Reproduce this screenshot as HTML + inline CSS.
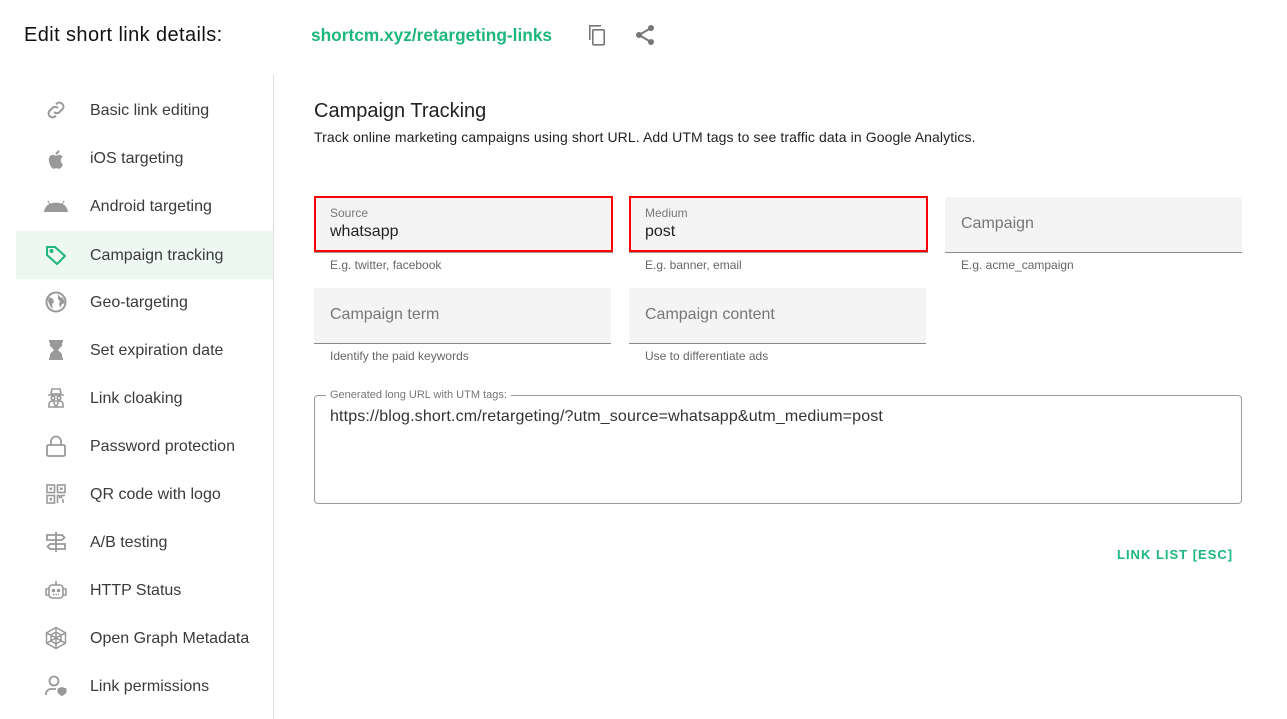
<!DOCTYPE html>
<html><head><meta charset="utf-8"><style>
*{box-sizing:border-box;margin:0;padding:0}
body{width:1287px;height:719px;background:#fff;font-family:"Liberation Sans",Arial,sans-serif;color:#212121;position:relative;overflow:hidden}
.abs{position:absolute}
.title{left:24px;top:24px;font-size:20px;color:#111;letter-spacing:0.4px}
.link{left:311px;top:25px;font-size:17.3px;font-weight:bold;color:#1db67d}
.side{left:273px;top:75px;width:1px;height:644px;background:#ddd}
.item{position:absolute;left:16px;width:257px;height:48px;font-size:16px;color:#3a3a3a}
.item span{position:absolute;left:74px;top:16px}
.item svg{position:absolute;left:28px;top:12px}
.sel{background:#edf8f3}
.field{position:absolute;background:#f4f4f4;border-bottom:1px solid #8a8a8a;height:56px;width:297px}
.field.err{border:2px solid #f00;box-shadow:0 1px 0 #999}
.ph{position:absolute;left:16px;top:18px;font-size:16px;color:#777}
.lab{position:absolute;left:14px;top:8px;font-size:12px;color:#777}
.val{position:absolute;left:14px;top:25px;font-size:16px;color:#222}
.help{position:absolute;font-size:12px;color:#666}
</style></head><body>
<div class="abs title">Edit short link details:</div>
<div class="abs link">shortcm.xyz/retargeting-links</div>
<svg class="abs" style="left:585px;top:23px" width="24" height="24" viewBox="0 0 24 24"><path d="M4 2v15h1.6V3.6H16V2z" fill="#777"/><rect x="7.8" y="6.8" width="11.4" height="15" rx="1" fill="none" stroke="#777" stroke-width="1.6"/></svg>
<svg class="abs" style="left:633px;top:23px" width="24" height="24" viewBox="0 0 24 24" fill="#777"><circle cx="18" cy="5" r="3"/><circle cx="6" cy="12" r="3"/><circle cx="18" cy="19" r="3"/><path d="M6 12L18 5M6 12l12 7" stroke="#777" stroke-width="2"/></svg>
<div class="abs side"></div>

<div class="item" style="top:86px"><svg width="24" height="24" viewBox="0 0 24 24" fill="none" stroke="#999" stroke-width="2"><path d="M10 14a4 4 0 0 0 5.6 0l3-3a4 4 0 0 0-5.6-5.6l-1 1"/><path d="M14 10a4 4 0 0 0-5.6 0l-3 3a4 4 0 0 0 5.6 5.6l1-1"/></svg><span>Basic link editing</span></div>
<div class="item" style="top:134px"><svg width="24" height="24" viewBox="2 1 20 20" fill="#999"><path d="M16 13c0-2 1.6-3 1.7-3-1-1.4-2.4-1.6-2.9-1.6-1.2-.1-2.4.7-3 .7s-1.6-.7-2.6-.7C7.8 8.4 6 9.6 6 12.5c0 3.4 2.4 7.5 4 7.5.9 0 1.3-.6 2.3-.6s1.3.6 2.3.6c1.6 0 2.8-2.7 3.2-3.8-.1 0-1.8-.8-1.8-3.2zM14 7c.6-.7 1-1.6.9-2.5-.8 0-1.8.5-2.4 1.2-.5.6-1 1.5-.9 2.4.9.1 1.8-.4 2.4-1.1z"/></svg><span>iOS targeting</span></div>
<div class="item" style="top:182px"><svg width="24" height="24" viewBox="0 0 24 24" fill="#999"><path d="M0 18c.3-3.5 2.3-6.5 5.2-8L3.4 7l.8-.5 1.9 3.1C7.6 9 10.3 8.6 12 8.6s4.4.4 5.9 1L19.8 6.5l.8.5-1.8 3c2.9 1.5 4.9 4.5 5.2 8z"/></svg><span>Android targeting</span></div>
<div class="item sel" style="top:231px"><svg width="24" height="24" viewBox="0 0 24 24" fill="none" stroke="#1db67d" stroke-width="2"><path d="M3 4h8l10 9-8 8L3 12z" stroke-linejoin="round"/><circle cx="7.5" cy="8" r="1" fill="#1db67d"/></svg><span>Campaign tracking</span></div>
<div class="item" style="top:278px"><svg width="24" height="24" viewBox="0 0 24 24"><circle cx="12" cy="12" r="9.5" fill="none" stroke="#999" stroke-width="2"/><path d="M5 7l4 2 1 3-2 2 1 5-3-3-2-5zM14 4l2 3 3 1 2 5-3 1-2 4-1-4 1-3-2-2z" fill="#999"/></svg><span>Geo-targeting</span></div>
<div class="item" style="top:326px"><svg width="24" height="24" viewBox="0 0 24 24" fill="#999"><path d="M5 2h14v2.5h-1v3.5l-4 4 4 4v3.5h1V22H5v-2.5h1V16l4-4-4-4V4.5H5z"/></svg><span>Set expiration date</span></div>
<div class="item" style="top:374px"><svg width="24" height="24" viewBox="0 0 24 24" fill="none" stroke="#999" stroke-width="1.6"><path d="M8 3h8l1 5H7zM4 9h16"/><circle cx="9" cy="12" r="1.8"/><circle cx="15" cy="12" r="1.8"/><path d="M5 21v-3a3 3 0 0 1 3-3h8a3 3 0 0 1 3 3v3zM9 15l3 6 3-6"/></svg><span>Link cloaking</span></div>
<div class="item" style="top:422px"><svg width="24" height="24" viewBox="0 0 24 24" fill="none" stroke="#999" stroke-width="1.8"><rect x="3" y="11" width="18" height="11" rx="1.5"/><path d="M7 11V7.5a5 5 0 0 1 10 0V11"/></svg><span>Password protection</span></div>
<div class="item" style="top:470px"><svg width="24" height="24" viewBox="0 0 24 24" fill="none" stroke="#999" stroke-width="1.6"><rect x="3" y="3" width="7.5" height="7.5"/><rect x="13.5" y="3" width="7.5" height="7.5"/><rect x="3" y="13.5" width="7.5" height="7.5"/><rect x="5.5" y="5.5" width="2.5" height="2.5" fill="#999" stroke="none"/><rect x="16" y="5.5" width="2.5" height="2.5" fill="#999" stroke="none"/><rect x="5.5" y="16" width="2.5" height="2.5" fill="#999" stroke="none"/><path d="M13.5 21v-7.5h2v2h2v-2h3.5M19 17v4"/></svg><span>QR code with logo</span></div>
<div class="item" style="top:518px"><svg width="24" height="24" viewBox="0 0 24 24" fill="none" stroke="#999" stroke-width="1.8"><path d="M12 2v20M3 5h15l2.5 2.5L18 10H3zM21 14H6l-2.5 2.5L6 19h15z"/></svg><span>A/B testing</span></div>
<div class="item" style="top:566px"><svg width="24" height="24" viewBox="0 0 24 24" fill="none" stroke="#999" stroke-width="1.6"><rect x="5" y="7" width="14" height="13" rx="3"/><path d="M12 3v4M5 11H2v6h3M19 11h3v6h-3"/><circle cx="9.5" cy="12.5" r="1" fill="#999"/><circle cx="14.5" cy="12.5" r="1" fill="#999"/><path d="M9 16.5h6" stroke-dasharray="1.5 1"/></svg><span>HTTP Status</span></div>
<div class="item" style="top:614px"><svg width="24" height="24" viewBox="0 0 24 24" fill="none" stroke="#999" stroke-width="1.5"><path d="M12 1.5l9.5 5.3v10.4L12 22.5l-9.5-5.3V6.8zM12 6l5 3v6l-5 3-5-3V9zM12 1.5v21M2.5 6.8l19 10.4M21.5 6.8l-19 10.4"/></svg><span>Open Graph Metadata</span></div>
<div class="item" style="top:662px"><svg width="24" height="24" viewBox="0 0 24 24" fill="none" stroke="#999" stroke-width="1.8"><circle cx="10" cy="7" r="4.5"/><path d="M2 21v-1a5 5 0 0 1 5-5h5"/><path d="M18 13l4.5 1.5v3c0 2-2.2 3.5-4.5 4.5-2.3-1-4.5-2.5-4.5-4.5v-3z" fill="#999" stroke="none"/></svg><span>Link permissions</span></div>

<div class="abs" style="left:314px;top:100px;font-size:20px;color:#222">Campaign Tracking</div>
<div class="abs" style="left:314px;top:129px;font-size:14px;color:#222;letter-spacing:0.1px">Track online marketing campaigns using short URL. Add UTM tags to see traffic data in Google Analytics.</div>

<div class="field err" style="left:314px;top:196px;width:299px"><div class="lab">Source</div><div class="val">whatsapp</div></div>
<div class="help" style="left:330px;top:258px">E.g. twitter, facebook</div>
<div class="field err" style="left:629px;top:196px;width:299px"><div class="lab">Medium</div><div class="val">post</div></div>
<div class="help" style="left:645px;top:258px">E.g. banner, email</div>
<div class="field" style="left:945px;top:197px"><div class="ph">Campaign</div></div>
<div class="help" style="left:961px;top:258px">E.g. acme_campaign</div>
<div class="field" style="left:314px;top:288px"><div class="ph">Campaign term</div></div>
<div class="help" style="left:330px;top:349px">Identify the paid keywords</div>
<div class="field" style="left:629px;top:288px"><div class="ph">Campaign content</div></div>
<div class="help" style="left:645px;top:349px">Use to differentiate ads</div>

<div class="abs" style="left:314px;top:395px;width:928px;height:109px;border:1px solid #999;border-radius:4px"></div>
<div class="abs" style="left:326px;top:389px;background:#fff;padding:0 4px;font-size:11px;color:#777">Generated long URL with UTM tags:</div>
<div class="abs" style="left:330px;top:408px;font-size:16px;color:#333;letter-spacing:0.15px">https://blog.short.cm/retargeting/?utm_source=whatsapp&amp;utm_medium=post</div>

<div class="abs" style="left:1117px;top:547px;font-size:13px;font-weight:bold;letter-spacing:1px;color:#1db67d">LINK LIST [ESC]</div>
</body></html>
